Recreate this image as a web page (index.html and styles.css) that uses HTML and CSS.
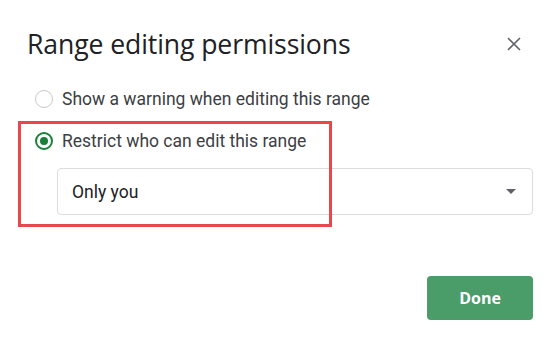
FILE: index.html
```html
<!DOCTYPE html>
<html lang="en">
<head>
  <meta charset="UTF-8">
  <title>Range editing permissions</title>
  <link rel="stylesheet" href="styles.css">
</head>
<body>
  <div class="dialogo">
    <div class="cabecera">
      <h1 class="titulo">Range editing permissions</h1>
      <button class="cerrar" aria-label="Close">
        <svg width="14" height="14" viewBox="0 0 14 14"><path d="M1 1L13 13M13 1L1 13" stroke="#5f6368" stroke-width="1.6" fill="none"/></svg>
      </button>
    </div>

    <div class="opciones">
      <label class="opcion">
        <span class="radio"></span>
        <span>Show a warning when editing this range</span>
      </label>
      <label class="opcion">
        <span class="radio activo"></span>
        <span>Restrict who can edit this range</span>
      </label>
      <div class="selector">
        <span>Only you</span>
        <span class="flecha"></span>
      </div>
      <div class="marca"></div>
    </div>

    <div class="pie">
      <button class="listo">Done</button>
    </div>
  </div>
</body>
</html>
```

FILE: styles.css
```css
body {
  margin: 0;
  background: #fff;
  font-family: Roboto, 'Liberation Sans', sans-serif;
}

.dialogo {
  width: 559px;
  height: 344px;
  padding: 28px 26px 0 27px;
  box-sizing: border-box;
}

.cabecera {
  display: flex;
  justify-content: space-between;
  align-items: center;
}

.titulo {
  margin: 0;
  font-family: 'Open Sans', sans-serif;
  font-weight: 400;
  font-size: 26.6px;
  color: #202124;
  line-height: 32px;
  letter-spacing: -0.1px;
}

.cerrar {
  background: none;
  border: none;
  padding: 0;
  margin-right: 12px;
  width: 14px;
  height: 14px;
  display: flex;
}

.opciones {
  position: relative;
  margin-top: 23px;
}

.opcion {
  display: flex;
  align-items: center;
  gap: 9px;
  height: 32px;
  margin-left: 8px;
  margin-bottom: 10px;
  font-size: 17.5px;
  color: #3c4043;
}

.radio {
  width: 16px;
  height: 16px;
  border: 1.5px solid #c8c8c8;
  border-radius: 50%;
  position: relative;
}

.radio.activo {
  border: 2.5px solid #188038;
  width: 14px;
  height: 14px;
}

.radio.activo::after {
  content: '';
  position: absolute;
  left: 3px;
  top: 3px;
  width: 8px;
  height: 8px;
  border-radius: 50%;
  background: #188038;
}

.selector {
  margin: 11px 0 0 30px;
  height: 47px;
  border: 1px solid #dadce0;
  border-radius: 4px;
  display: flex;
  align-items: center;
  justify-content: space-between;
  padding: 0 16px 0 14px;
  font-size: 17.5px;
  color: #202124;
  box-sizing: border-box;
}

.flecha {
  width: 0;
  height: 0;
  border-left: 5px solid transparent;
  border-right: 5px solid transparent;
  border-top: 5px solid #5f6368;
}

.marca {
  position: absolute;
  left: -9px;
  top: 38px;
  width: 314px;
  height: 106px;
  border: 3px solid #e8474c;
  box-sizing: border-box;
}

.pie {
  display: flex;
  justify-content: flex-end;
  margin-top: 61px;
}

.listo {
  width: 106px;
  height: 44px;
  border: none;
  border-radius: 4px;
  background: #4a9c69;
  color: #fff;
  font-family: 'Open Sans', sans-serif;
  font-weight: 700;
  font-size: 16px;
}
```
